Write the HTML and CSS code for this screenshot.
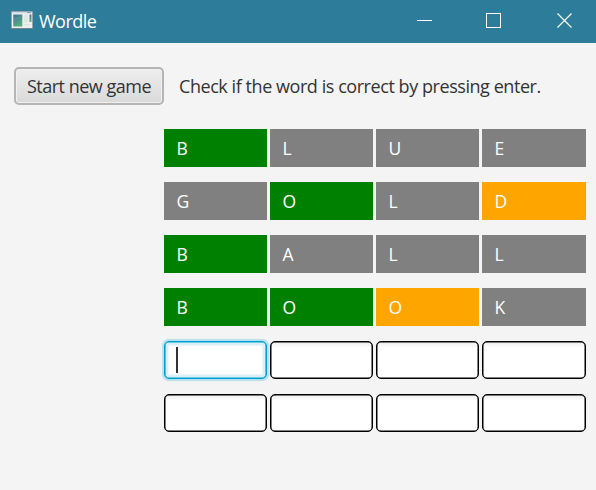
FILE: index.html
```html
<!DOCTYPE html>
<html lang="en">
<head>
<meta charset="utf-8">
<title>Wordle</title>
<link rel="stylesheet" href="styles.css">
</head>
<body>
<header class="titlebar">
  <svg class="app-icon" width="22" height="18" viewBox="0 0 22 18">
    <defs><linearGradient id="g" x1="0" y1="0" x2=".5" y2="1"><stop offset="0" stop-color="#416f9f"/><stop offset="1" stop-color="#55ad7d"/></linearGradient></defs>
    <rect x="0" y="0" width="22" height="18" fill="#6c8790"/>
    <rect x=".7" y=".7" width="20.6" height="16.3" fill="#f0efed"/>
    <rect x="1" y="1" width="20" height="1.3" fill="#d2d9e2"/>
    <path d="M16 1.6h4" stroke="#7f9dbb"/>
    <rect x="2.3" y="3.5" width="9" height="12" fill="url(#g)"/>
    <path d="M2.3 10C5 7 8 6 11.3 6" stroke="#5b9b94" fill="none"/>
    <rect x="13" y="3.5" width="4" height="8" fill="#e2e6e3"/>
    <rect x="18.5" y="3.5" width="2" height="7.5" fill="url(#g)"/>
    <path d="M13 13.5h7" stroke="#e2e3df"/>
  </svg>
  <span class="title">Wordle</span>
  <svg class="controls" width="156" height="16" viewBox="0 0 156 16" fill="none" stroke="#fff">
    <path d="M0 7.5h15"/>
    <rect x="69.5" y=".5" width="14" height="14"/>
    <path d="M140.5 .5l14 14M154.5 .5l-14 14" stroke-width="1.15"/>
  </svg>
</header>
<main>
  <div class="toolbar">
    <button class="start">Start new game</button>
    <span class="message">Check if the word is correct by pressing enter.</span>
  </div>
  <div class="board">
    <div class="tile green">B</div><div class="tile">L</div><div class="tile">U</div><div class="tile">E</div>
    <div class="tile">G</div><div class="tile green">O</div><div class="tile">L</div><div class="tile orange">D</div>
    <div class="tile green">B</div><div class="tile">A</div><div class="tile">L</div><div class="tile">L</div>
    <div class="tile green">B</div><div class="tile green">O</div><div class="tile orange">O</div><div class="tile">K</div>
    <div class="field focused"><span class="caret"></span></div><div class="field"></div><div class="field"></div><div class="field"></div>
    <div class="field"></div><div class="field"></div><div class="field"></div><div class="field"></div>
  </div>
</main>
</body>
</html>
```
FILE: styles.css
```css
* { box-sizing: border-box; }
body {
  margin: 0;
  height: 490px;
  overflow: hidden;
  background: #f4f4f4;
  color: #333;
  font: 18px/24px "Open Sans", "Noto Sans", sans-serif;
}
.titlebar {
  display: flex;
  height: 43px;
  padding: 0 23px 0 10.5px;
  background: #2d7d9a;
  color: #fff;
}
.app-icon { margin-top: 10.5px; }
.title {
  margin: 9px 0 0 6.5px;
  font-size: 18px;
  letter-spacing: -0.5px;
}
.controls { margin: 13px 0 0 auto; }
main { padding: 24px 10px 0 14px; }
.toolbar { display: flex; height: 38px; }
.start {
  width: 150px;
  height: 38px;
  padding: 0;
  border: 2px solid #b5b5b5;
  border-radius: 5px;
  background: linear-gradient(#eee, #d9d9d9);
  box-shadow: inset 0 0 0 1px #f0f0f0;
  color: #333;
  font: inherit;
  letter-spacing: -0.5px;
  white-space: nowrap;
}
.message {
  margin: 7px 0 0 15px;
  letter-spacing: -0.44px;
  white-space: nowrap;
}
.board {
  display: grid;
  grid-template-columns: 103px 103px 103px 104px;
  grid-auto-rows: 38px;
  gap: 15px 3px;
  margin: 24px 0 0 150px;
}
.tile {
  padding: 7px 0 0 12.5px;
  background: #808080;
  color: #fff;
  font-size: 17.5px;
}
.green { background: #008000; }
.orange { background: #ffa500; }
.field {
  border: 1px solid #000;
  border-radius: 5px;
  background: linear-gradient(#eee, #fff 6px);
  box-shadow: inset 0 0 0 .5px #000;
}
.focused {
  padding: 5px 0 0 11px;
  border-color: #039ed3;
  background: #fff;
  box-shadow: inset 0 0 0 .6px #039ed3, inset 0 0 0 3.5px #daf0f6, 0 0 1px 1.5px #b4e0ef;
}
.caret {
  display: block;
  width: 1.5px;
  height: 26px;
  background: #333;
}
```
